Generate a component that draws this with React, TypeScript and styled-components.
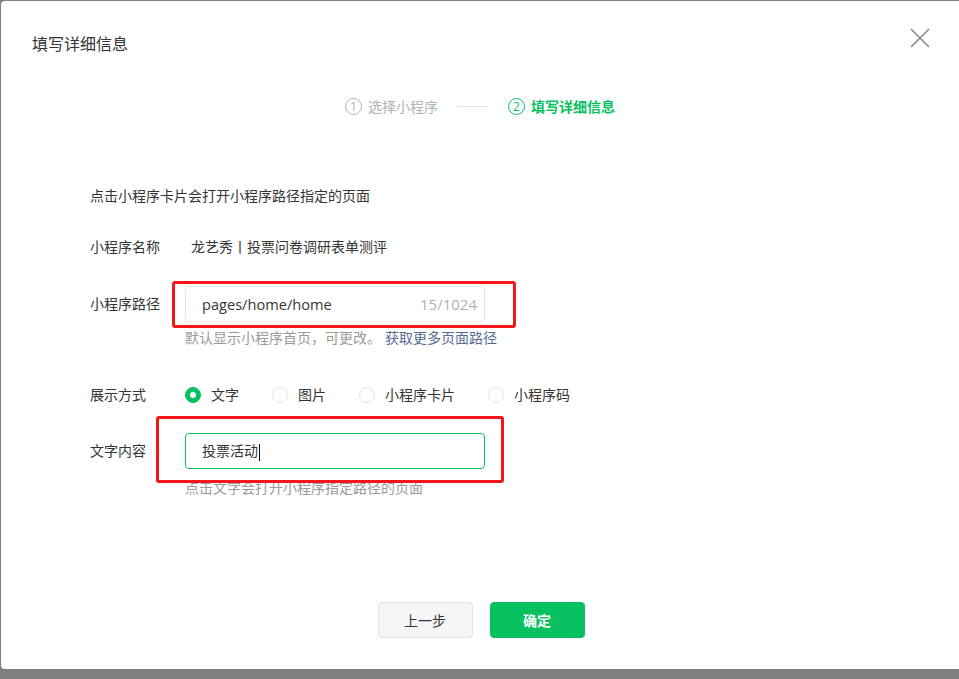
import React from 'react';
import styled, { createGlobalStyle } from 'styled-components';

const GlobalStyle = createGlobalStyle`
  body {
    margin: 0;
    background: #7f7f7f;
    font-family: "Open Sans", "Noto Sans CJK SC", sans-serif;
    color: #353535;
  }
`;

const Dialog = styled.div`
  margin: 1px 0 0 1px;
  width: 958px;
  height: 668px;
  background: #fff;
  border-radius: 4px 0 0 4px;
  position: relative;
  display: flex;
  flex-direction: column;
`;

const Title = styled.div`
  padding: 33px 0 0 31px;
  font-size: 16px;
  line-height: 20px;
  color: #353535;
`;

const Close = styled.button`
  position: absolute;
  top: 26px;
  right: 28px;
  width: 22px;
  height: 22px;
  padding: 0;
  border: 0;
  background: none;
  cursor: pointer;
`;

const Steps = styled.div`
  margin-top: 42px;
  display: flex;
  justify-content: center;
  align-items: center;
  height: 20px;
  font-size: 14px;
`;

const Step = styled.div<{ $active?: boolean }>`
  display: flex;
  align-items: center;
  gap: 6px;
  color: ${(p) => (p.$active ? '#07c160' : '#b2b2b2')};
  font-weight: ${(p) => (p.$active ? 600 : 400)};
`;

const StepNum = styled.span`
  width: 15px;
  height: 15px;
  border: 1px solid currentColor;
  border-radius: 50%;
  font-size: 12px;
  font-weight: 400;
  line-height: 15px;
  text-align: center;
`;

const StepLine = styled.div`
  width: 32px;
  height: 1px;
  background: #e5e5e5;
  margin: 0 19px;
`;

const Body = styled.div`
  padding-left: 89px;
  font-size: 14px;
  line-height: 20px;
`;

const Desc = styled.div`
  margin-top: 70px;
`;

const Row = styled.div<{ $top: number }>`
  display: flex;
  align-items: center;
  margin-top: ${(p) => p.$top}px;
`;

const Label = styled.div`
  width: 95px;
  flex-shrink: 0;
`;

const Value = styled.div`
  padding-left: 6px;
`;

const InputWrap = styled.div`
  position: relative;
`;

const Input = styled.div<{ $focus?: boolean }>`
  box-sizing: border-box;
  width: 300px;
  height: 36px;
  border: 1px solid ${(p) => (p.$focus ? '#07c160' : '#e5e5e5')};
  border-radius: 4px;
  padding: 0 7px 0 16px;
  display: flex;
  align-items: center;
  font-size: 14px;
`;

const InputText = styled.span<{ $size?: number }>`
  flex: 1;
  color: #353535;
  font-size: ${(p) => p.$size ?? 14}px;
`;

const Caret = styled.span`
  display: inline-block;
  width: 1px;
  height: 17px;
  background: #111;
  vertical-align: middle;
  margin-left: 1px;
`;

const Counter = styled.span`
  color: #b2b2b2;
  font-size: 15px;
`;

const Highlight = styled.div<{ $l: number; $t: number; $r: number; $b: number }>`
  position: absolute;
  left: ${(p) => p.$l}px;
  top: ${(p) => p.$t}px;
  right: ${(p) => p.$r}px;
  bottom: ${(p) => p.$b}px;
  border: 3px solid #f5161a;
  border-radius: 3px;
  pointer-events: none;
`;

const Hint = styled.div<{ $top: number }>`
  margin: ${(p) => p.$top}px 0 0 95px;
  color: #9a9a9a;
`;

const Link = styled.a`
  color: #576b95;
  margin-left: 4px;
  text-decoration: none;
`;

const Radios = styled.div`
  display: flex;
  gap: 33px;
`;

const RadioItem = styled.label`
  display: flex;
  align-items: center;
  gap: 10px;
`;

const RadioDot = styled.span<{ $on?: boolean }>`
  box-sizing: border-box;
  width: 16px;
  height: 16px;
  border-radius: 50%;
  border: 1px solid ${(p) => (p.$on ? '#07c160' : '#e2e2e2')};
  background: ${(p) => (p.$on ? '#07c160' : '#fff')};
  display: flex;
  align-items: center;
  justify-content: center;
  &::after {
    content: '';
    width: 6px;
    height: 6px;
    border-radius: 50%;
    background: ${(p) => (p.$on ? '#fff' : 'transparent')};
  }
`;

const Footer = styled.div`
  margin-top: auto;
  margin-bottom: 31px;
  display: flex;
  justify-content: center;
  gap: 17px;
  padding-left: 2px;
`;

const Btn = styled.button<{ $primary?: boolean }>`
  width: 95px;
  height: 36px;
  border-radius: 4px;
  font-family: inherit;
  font-size: 14px;
  border: 1px solid ${(p) => (p.$primary ? '#07c160' : '#e2e3e6')};
  background: ${(p) => (p.$primary ? '#07c160' : '#f4f5f7')};
  color: ${(p) => (p.$primary ? '#fff' : '#353535')};
  font-weight: ${(p) => (p.$primary ? 600 : 400)};
`;

const radios = ['文字', '图片', '小程序卡片', '小程序码'];

const App: React.FC = () => {
  return (
    <>
      <GlobalStyle />
      <Dialog>
        <Title>填写详细信息</Title>
        <Close aria-label="close">
          <svg width="22" height="22" viewBox="0 0 22 22">
            <path d="M2 2 L20 20 M20 2 L2 20" stroke="#8a8a8a" strokeWidth="1.6" />
          </svg>
        </Close>

        <Steps>
          <Step>
            <StepNum>1</StepNum>选择小程序
          </Step>
          <StepLine />
          <Step $active>
            <StepNum>2</StepNum>填写详细信息
          </Step>
        </Steps>

        <Body>
          <Desc>点击小程序卡片会打开小程序路径指定的页面</Desc>

          <Row $top={31}>
            <Label>小程序名称</Label>
            <Value>龙艺秀丨投票问卷调研表单测评</Value>
          </Row>

          <Row $top={29}>
            <Label>小程序路径</Label>
            <InputWrap>
              <Input>
                <InputText $size={14.6}>pages/home/home</InputText>
                <Counter>15/1024</Counter>
              </Input>
              <Highlight $l={-13} $t={-5} $r={-31} $b={-6} />
            </InputWrap>
          </Row>
          <Hint $top={6}>
            默认显示小程序首页，可更改。<Link>获取更多页面路径</Link>
          </Hint>

          <Row $top={37}>
            <Label>展示方式</Label>
            <Radios>
              {radios.map((r, i) => (
                <RadioItem key={r}>
                  <RadioDot $on={i === 0} />
                  {r}
                </RadioItem>
              ))}
            </Radios>
          </Row>

          <Row $top={28}>
            <Label>文字内容</Label>
            <InputWrap>
              <Input $focus>
                <InputText>
                  投票活动<Caret />
                </InputText>
              </Input>
              <Highlight $l={-29} $t={-17} $r={-19} $b={-14} />
            </InputWrap>
          </Row>
          <Hint $top={9}>点击文字会打开小程序指定路径的页面</Hint>
        </Body>

        <Footer>
          <Btn>上一步</Btn>
          <Btn $primary>确定</Btn>
        </Footer>
      </Dialog>
    </>
  );
};

export default App;
